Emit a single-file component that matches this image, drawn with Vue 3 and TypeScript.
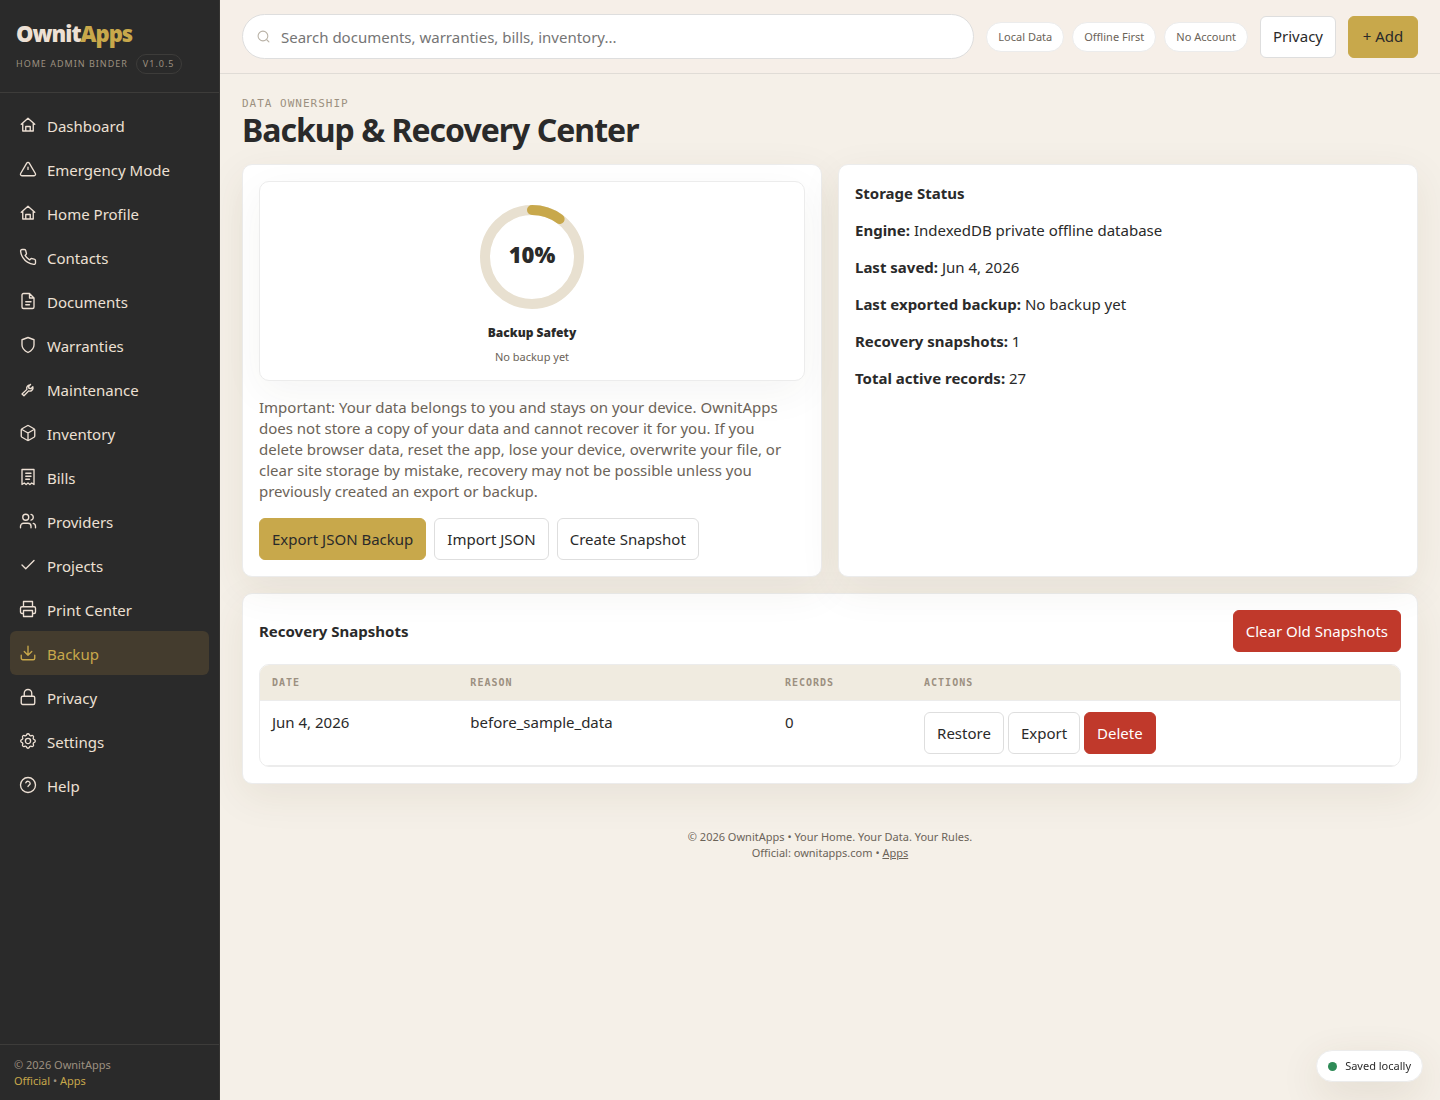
<script setup lang="ts">
import { ref } from 'vue'

interface NavItem {
  label: string
  icon: string
}

interface Snapshot {
  date: string
  reason: string
  records: number
}

const icons: Record<string, string> = {
  home: 'M3 11l9-8 9 8M5 10v10h14V10M9 20v-6h6v6',
  alert: 'M10.3 4.1 2.2 18a2 2 0 0 0 1.7 3h16.2a2 2 0 0 0 1.7-3L13.7 4.1a2 2 0 0 0-3.4 0zM12 9.5v3',
  phone:
    'M22 16.92v3a2 2 0 0 1-2.18 2 19.79 19.79 0 0 1-8.63-3.07 19.5 19.5 0 0 1-6-6 19.79 19.79 0 0 1-3.07-8.67A2 2 0 0 1 4.11 2h3a2 2 0 0 1 2 1.72c.13.96.36 1.9.7 2.81a2 2 0 0 1-.45 2.11L8.09 9.91a16 16 0 0 0 6 6l1.27-1.27a2 2 0 0 1 2.11-.45c.91.34 1.85.57 2.81.7A2 2 0 0 1 22 16.92z',
  file: 'M14 2H6a2 2 0 0 0-2 2v16a2 2 0 0 0 2 2h12a2 2 0 0 0 2-2V8zM14 2v6h6M9 13h7M9 17h5',
  shield: 'M12 22s8-4 8-10V5l-8-3-8 3v7c0 6 8 10 8 10z',
  wrench:
    'M14.5 6.5a4.5 4.5 0 0 0-4 6L4 18.6 6.6 21l6.2-6.4a4.5 4.5 0 0 0 5.7-5.6l-2.7 2.6-2.5-.6-.6-2.4 2.7-2.7z',
  box: 'M21 8v8a2 2 0 0 1-1 1.7l-7 4a2 2 0 0 1-2 0l-7-4A2 2 0 0 1 3 16V8a2 2 0 0 1 1-1.7l7-4a2 2 0 0 1 2 0l7 4A2 2 0 0 1 21 8zM3.3 7 12 12l8.7-5M12 22V12',
  receipt: 'M4 2h16v20l-3-2-2.5 2-2.5-2-2.5 2L7 20l-3 2zM9 7h7M9 11h7M9 15h5',
  users:
    'M16 21v-2a4 4 0 0 0-4-4H6a4 4 0 0 0-4 4v2M9 3a4 4 0 1 0 0 8 4 4 0 0 0 0-8zM22 21v-2a4 4 0 0 0-3-3.87M16 3.13a4 4 0 0 1 0 7.75',
  check: 'M20 6 9 17l-5-5',
  printer:
    'M6 9V2h12v7M6 18H4a2 2 0 0 1-2-2v-5a2 2 0 0 1 2-2h16a2 2 0 0 1 2 2v5a2 2 0 0 1-2 2h-2M6 14h12v8H6z',
  download: 'M21 15v4a2 2 0 0 1-2 2H5a2 2 0 0 1-2-2v-4M7 10l5 5 5-5M12 15V3',
  lock: 'M5 11h14a2 2 0 0 1 2 2v7a2 2 0 0 1-2 2H5a2 2 0 0 1-2-2v-7a2 2 0 0 1 2-2zM7 11V7a5 5 0 0 1 10 0v4',
  gear:
    'M12 8.5a3.5 3.5 0 1 0 0 7 3.5 3.5 0 0 0 0-7zM10.2 3.6A1.9 1.9 0 0 1 13.8 3.6A1.9 1.9 0 0 0 16.67 4.79A1.9 1.9 0 0 1 19.21 7.33A1.9 1.9 0 0 0 20.4 10.2A1.9 1.9 0 0 1 20.4 13.8A1.9 1.9 0 0 0 19.21 16.67A1.9 1.9 0 0 1 16.67 19.21A1.9 1.9 0 0 0 13.8 20.4A1.9 1.9 0 0 1 10.2 20.4A1.9 1.9 0 0 0 7.33 19.21A1.9 1.9 0 0 1 4.79 16.67A1.9 1.9 0 0 0 3.6 13.8A1.9 1.9 0 0 1 3.6 10.2A1.9 1.9 0 0 0 4.79 7.33A1.9 1.9 0 0 1 7.33 4.79A1.9 1.9 0 0 0 10.2 3.6z',
  help: 'M12 2a10 10 0 1 0 0 20 10 10 0 0 0 0-20zM9.1 9a3 3 0 0 1 5.8 1c0 2-2.9 2.6-2.9 4'
}

const navItems: NavItem[] = [
  { label: 'Dashboard', icon: 'home' },
  { label: 'Emergency Mode', icon: 'alert' },
  { label: 'Home Profile', icon: 'home' },
  { label: 'Contacts', icon: 'phone' },
  { label: 'Documents', icon: 'file' },
  { label: 'Warranties', icon: 'shield' },
  { label: 'Maintenance', icon: 'wrench' },
  { label: 'Inventory', icon: 'box' },
  { label: 'Bills', icon: 'receipt' },
  { label: 'Providers', icon: 'users' },
  { label: 'Projects', icon: 'check' },
  { label: 'Print Center', icon: 'printer' },
  { label: 'Backup', icon: 'download' },
  { label: 'Privacy', icon: 'lock' },
  { label: 'Settings', icon: 'gear' },
  { label: 'Help', icon: 'help' }
]

const chips = ['Local Data', 'Offline First', 'No Account']

const status = [
  { label: 'Engine:', value: 'IndexedDB private offline database' },
  { label: 'Last saved:', value: 'Jun 4, 2026' },
  { label: 'Last exported backup:', value: 'No backup yet' },
  { label: 'Recovery snapshots:', value: '1' },
  { label: 'Total active records:', value: '27' }
]

const snapshots: Snapshot[] = [{ date: 'Jun 4, 2026', reason: 'before_sample_data', records: 0 }]

const active = ref('Backup')
const query = ref('')
const safety = ref(10)
</script>

<template>
  <div class="app">
    <aside class="sidebar">
      <div class="brand">
        <div class="brand-name">Ownit<span>Apps</span></div>
        <div class="brand-sub">
          <span>HOME ADMIN BINDER</span>
          <span class="version">V1.0.5</span>
        </div>
      </div>
      <nav class="nav" aria-label="Main">
        <button
          v-for="item in navItems"
          :key="item.label"
          type="button"
          class="nav-item"
          :class="{ active: item.label === active }"
          @click="active = item.label"
        >
          <span class="nav-icon">
            <svg viewBox="0 0 24 24" aria-hidden="true"><path :d="icons[item.icon]" /></svg>
          </span>
          <span class="nav-label">{{ item.label }}</span>
        </button>
      </nav>
      <div class="side-foot">
        <div>© 2026 OwnitApps</div>
        <div><a href="#official">Official</a> • <a href="#apps">Apps</a></div>
      </div>
    </aside>

    <div class="main">
      <header class="topbar">
        <label class="search">
          <svg viewBox="0 0 24 24" aria-hidden="true">
            <circle cx="11" cy="11" r="9" />
            <path d="M22 22l-4-4" />
          </svg>
          <input
            v-model="query"
            type="text"
            aria-label="Search"
            placeholder="Search documents, warranties, bills, inventory..."
          />
        </label>
        <div class="chips">
          <span v-for="chip in chips" :key="chip" class="chip">{{ chip }}</span>
        </div>
        <button type="button" class="btn">Privacy</button>
        <button type="button" class="btn gold">+ Add</button>
      </header>

      <main class="content">
        <div class="eyebrow">DATA OWNERSHIP</div>
        <h1>Backup &amp; Recovery Center</h1>

        <div class="grid">
          <section class="card">
            <div class="score">
              <div class="ring">
                <svg viewBox="0 0 104 104" aria-hidden="true">
                  <circle class="track" cx="52" cy="52" r="47" />
                  <circle
                    class="value"
                    cx="52"
                    cy="52"
                    r="47"
                    pathLength="100"
                    :stroke-dasharray="`${safety} 100`"
                    transform="rotate(-90 52 52)"
                  />
                </svg>
                <span class="ring-text">{{ safety }}%</span>
              </div>
              <div class="score-title">Backup Safety</div>
              <div class="score-sub">No backup yet</div>
            </div>
            <p class="notice">
              Important: Your data belongs to you and stays on your device. OwnitApps does not store
              a copy of your data and cannot recover it for you. If you delete browser data, reset
              the app, lose your device, overwrite your file, or clear site storage by mistake,
              recovery may not be possible unless you previously created an export or backup.
            </p>
            <div class="actions">
              <button type="button" class="btn gold">Export JSON Backup</button>
              <button type="button" class="btn">Import JSON</button>
              <button type="button" class="btn">Create Snapshot</button>
            </div>
          </section>

          <section class="card">
            <h3>Storage Status</h3>
            <p v-for="row in status" :key="row.label" class="status">
              <strong>{{ row.label }}</strong> {{ row.value }}
            </p>
          </section>
        </div>

        <section class="card">
          <div class="card-head">
            <h3>Recovery Snapshots</h3>
            <button type="button" class="btn danger">Clear Old Snapshots</button>
          </div>
          <div class="table-wrap">
            <table>
              <colgroup>
                <col class="c-date" />
                <col class="c-reason" />
                <col class="c-records" />
                <col />
              </colgroup>
              <thead>
                <tr>
                  <th scope="col">DATE</th>
                  <th scope="col">REASON</th>
                  <th scope="col">RECORDS</th>
                  <th scope="col">ACTIONS</th>
                </tr>
              </thead>
              <tbody>
                <tr v-for="snap in snapshots" :key="snap.reason">
                  <td>{{ snap.date }}</td>
                  <td>{{ snap.reason }}</td>
                  <td>{{ snap.records }}</td>
                  <td>
                    <div class="row-actions">
                      <button type="button" class="btn">Restore</button>
                      <button type="button" class="btn">Export</button>
                      <button type="button" class="btn danger">Delete</button>
                    </div>
                  </td>
                </tr>
              </tbody>
            </table>
          </div>
        </section>

        <footer class="page-foot">
          <div>© 2026 OwnitApps • Your Home. Your Data. Your Rules.</div>
          <div>Official: ownitapps.com • <a href="#apps">Apps</a></div>
        </footer>
      </main>
    </div>

    <div class="saved" role="status"><span class="dot"></span>Saved locally</div>
  </div>
</template>

<style>
body {
  background: #f5f0e8;
}
</style>

<style scoped>
.app,
.app * {
  box-sizing: border-box;
}

.app {
  display: flex;
  min-height: 100vh;
  color: #2a2a2a;
  font-family: 'Noto Sans', 'Open Sans', sans-serif;
  font-size: 15px;
  line-height: 21px;
}

button,
input {
  font: inherit;
}

.sidebar {
  position: sticky;
  top: 0;
  display: flex;
  flex: 0 0 220px;
  flex-direction: column;
  height: 100vh;
  background: #2a2a2a;
  border-right: 1px solid #363533;
  color: #ede0d4;
}

.brand {
  padding: 19px 16px 18px;
  border-bottom: 1px solid #3d3c3a;
}

.brand-name {
  font-size: 22px;
  font-weight: 900;
  line-height: 28px;
  letter-spacing: -1px;
}

.brand-name span {
  color: #c8a84b;
}

.brand-sub {
  display: flex;
  align-items: center;
  gap: 8px;
  margin-top: 7px;
  color: #9c9080;
  font-size: 9px;
  line-height: 18px;
  letter-spacing: 1px;
  white-space: nowrap;
}

.version {
  padding: 0 6px;
  border: 1px solid #3d3c3a;
  border-radius: 10px;
}

.nav {
  flex: 1;
  padding: 10px;
}

.nav-item {
  display: flex;
  align-items: center;
  gap: 9px;
  width: 100%;
  height: 44px;
  padding: 0 8px;
  border: 0;
  border-radius: 6px;
  background: none;
  color: #ede0d4;
  text-align: left;
}

.nav-item.active {
  background: #443c2e;
  color: #c8a84b;
}

.nav-icon {
  display: flex;
  justify-content: center;
  width: 20px;
}

.nav-icon svg {
  width: 18px;
  height: 18px;
  fill: none;
  stroke: currentColor;
  stroke-width: 1.8;
  stroke-linecap: round;
  stroke-linejoin: round;
}

.nav-label {
  padding-top: 2px;
}

.side-foot {
  padding: 12px 14px 11px;
  border-top: 1px solid #3d3c3a;
  color: #9c9080;
  font-size: 11px;
  line-height: 16px;
}

.side-foot a {
  color: #c8a84b;
  text-decoration: none;
}

.main {
  flex: 1;
  min-width: 0;
}

.topbar {
  display: flex;
  align-items: center;
  gap: 12px;
  padding: 14px 22px;
  background: #f6efe8;
  border-bottom: 1px solid #e0dcd6;
}

.topbar .gold {
  min-width: 70px;
}

.search {
  display: flex;
  flex: 1;
  align-items: center;
  gap: 11px;
  height: 45px;
  padding: 0 14px;
  background: #fff;
  border: 1px solid #dedede;
  border-radius: 23px;
}

.search svg {
  flex: none;
  width: 13px;
  height: 13px;
  fill: none;
  stroke: #b9b2a6;
  stroke-width: 2;
  stroke-linecap: round;
}

.search input {
  flex: 1;
  min-width: 0;
  padding: 2px 0 0;
  border: 0;
  outline: 0;
  background: none;
  color: #2a2a2a;
}

.search input::placeholder {
  color: #757575;
}

.chips {
  display: flex;
  gap: 8px;
}

.chip {
  padding: 5px 11px;
  background: #fff;
  border: 1px solid #ececec;
  border-radius: 15px;
  color: #6b6358;
  font-size: 11px;
  line-height: 18px;
  white-space: nowrap;
}

.btn {
  height: 42px;
  padding: 0 12px;
  background: #fff;
  border: 1px solid #dedede;
  border-radius: 6px;
  color: #2a2a2a;
  white-space: nowrap;
}

.btn.gold {
  background: #c8a84b;
  border-color: #c8a84b;
}

.btn.danger {
  background: #c0392b;
  border-color: #c0392b;
  color: #fff;
}

.content {
  padding: 22px;
}

.eyebrow {
  color: #9c9080;
  font-family: 'DejaVu Sans Mono', monospace;
  font-size: 11px;
  line-height: 16px;
  letter-spacing: 1px;
}

h1 {
  margin: 0 0 16px;
  font-size: 32px;
  font-weight: 700;
  line-height: 36px;
  letter-spacing: -1px;
}

h3 {
  margin: 0;
  font-size: 15px;
  font-weight: 700;
  line-height: 24px;
}

.grid {
  display: grid;
  grid-template-columns: 1fr 1fr;
  gap: 16px;
  margin-bottom: 16px;
}

.card {
  padding: 16px;
  background: #fff;
  border: 1px solid #ececec;
  border-radius: 10px;
  box-shadow: 0 12px 40px rgba(80, 60, 20, 0.08);
}

.score {
  display: flex;
  flex-direction: column;
  align-items: center;
  padding: 23px 16px 15px;
  background: #fff;
  border: 1px solid #ececec;
  border-radius: 10px;
  box-shadow: 0 12px 40px rgba(60, 50, 30, 0.05);
}

.ring {
  display: grid;
  place-items: center;
  height: 104px;
}

.ring svg,
.ring-text {
  grid-area: 1 / 1;
}

.ring svg {
  width: 104px;
  height: 104px;
  fill: none;
  stroke-width: 10;
}

.track {
  stroke: #e8e0d0;
}

.value {
  stroke: #c8a84b;
  stroke-linecap: round;
}

.ring-text {
  padding-bottom: 6px;
  font-size: 22px;
  font-weight: 900;
  line-height: 28px;
}

.score-title {
  margin-top: 14px;
  font-size: 12px;
  font-weight: 900;
  line-height: 20px;
}

.score-sub {
  margin-top: 6px;
  color: #6b6358;
  font-size: 11px;
  line-height: 16px;
}

.notice {
  margin: 16px 0;
  padding-right: 16px;
  color: #6b6358;
}

.actions {
  display: flex;
  gap: 8px;
}

.status {
  margin: 16px 0 0;
}

.card h3 + .status {
  margin-top: 15px;
}

.card-head {
  display: flex;
  align-items: center;
  justify-content: space-between;
  margin-bottom: 12px;
}

.table-wrap {
  overflow: hidden;
  border: 1px solid #ececec;
  border-radius: 10px;
}

table {
  width: 100%;
  border-collapse: collapse;
  table-layout: fixed;
}

.c-date {
  width: 17.4%;
}

.c-reason {
  width: 27.6%;
}

.c-records {
  width: 12.2%;
}

th,
td {
  padding: 11px 12px;
  border-bottom: 1px solid #ececec;
  text-align: left;
  vertical-align: top;
}

th {
  background: #f0ebe0;
  color: #9c9080;
  font-family: 'DejaVu Sans Mono', monospace;
  font-size: 10px;
  font-weight: 700;
  line-height: 13px;
  letter-spacing: 1px;
}

.row-actions {
  display: flex;
  gap: 4px;
}

.page-foot {
  padding-top: 45px;
  color: #6b6358;
  font-size: 11px;
  line-height: 16px;
  text-align: center;
}

.page-foot a {
  color: inherit;
}

.saved {
  position: fixed;
  right: 17px;
  bottom: 18px;
  display: flex;
  align-items: center;
  gap: 8px;
  padding: 6px 11px;
  background: #fff;
  border: 1px solid #ececec;
  border-radius: 16px;
  box-shadow: 0 12px 40px rgba(80, 60, 20, 0.12);
  font-size: 11px;
  line-height: 18px;
}

.dot {
  width: 9px;
  height: 9px;
  border-radius: 50%;
  background: #2e8b57;
}
</style>
